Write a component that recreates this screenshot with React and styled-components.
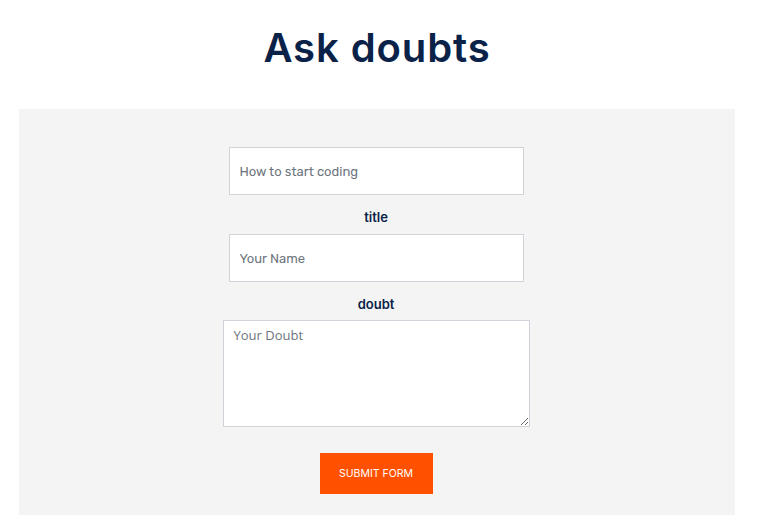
import React from 'react';
import styled, { createGlobalStyle } from 'styled-components';

const GlobalStyle = createGlobalStyle`
  body {
    margin: 0;
    background: #fff;
    font-family: "Open Sans", "Liberation Sans", sans-serif;
  }
`;

const Page = styled.div`
  padding: 0 23px 0 19px;
`;

const Title = styled.h1`
  margin: 0;
  padding-top: 24px;
  height: 109px;
  box-sizing: border-box;
  text-align: center;
  font-family: Inter, "Noto Sans", sans-serif;
  font-size: 40px;
  font-weight: 600;
  line-height: 48px;
  color: #0a2248;
  letter-spacing: 0.9px;
`;

const Panel = styled.section`
  background: #f4f4f4;
  padding: 38px 0 30px;
  min-height: 406px;
  box-sizing: border-box;
`;

const Form = styled.form`
  display: flex;
  flex-direction: column;
  align-items: center;
  padding-right: 2px;
`;

const Input = styled.input`
  box-sizing: border-box;
  width: 295px;
  height: 48px;
  padding: 0 10px;
  border: 1px solid #ced4da;
  background: #fff;
  font-family: Rubik, "Open Sans", sans-serif;
  font-size: 13px;
  color: #495057;
  outline: none;

  &::placeholder {
    color: #6c757d;
  }
`;

const Label = styled.label`
  display: block;
  margin: 12px 0 ${(p) => p.$after || 6}px;
  line-height: 21px;
  font-family: Inter, "Noto Sans", sans-serif;
  font-size: 13px;
  font-weight: 600;
  color: #0a2248;
`;

const TextArea = styled.textarea`
  display: block;
  box-sizing: border-box;
  width: 307px;
  height: 107px;
  padding: 5px 10px;
  border: 1px solid #ced4da;
  background: #fff;
  font-family: "Open Sans", sans-serif;
  font-size: 13px;
  color: #495057;
  outline: none;

  &::placeholder {
    color: #6c757d;
  }
`;

const Button = styled.button`
  margin-top: 26px;
  width: 113px;
  height: 41px;
  border: none;
  background: #ff5100;
  color: #fff;
  font-family: Inter, "Noto Sans", sans-serif;
  font-size: 10.5px;
  font-weight: 400;
  text-transform: uppercase;
  cursor: pointer;
`;

export default function App() {
  return (
    <Page>
      <GlobalStyle />
      <Title>Ask doubts</Title>
      <Panel>
        <Form onSubmit={(e) => e.preventDefault()}>
          <Input type="text" placeholder="How to start coding" />
          <Label>title</Label>
          <Input type="text" placeholder="Your Name" />
          <Label $after={5}>doubt</Label>
          <TextArea placeholder="Your Doubt" />
          <Button type="submit">Submit form</Button>
        </Form>
      </Panel>
    </Page>
  );
}
